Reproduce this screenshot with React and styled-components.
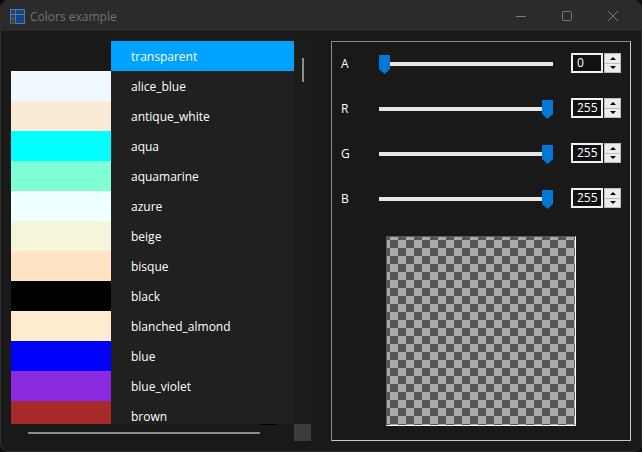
import React from "react";
import styled, { createGlobalStyle } from "styled-components";

const Global = createGlobalStyle`
  html, body { margin: 0; padding: 0; background: #0c0c0c; }
  #root { width: 642px; height: 452px; overflow: hidden; }
`;

const Window = styled.div`
  width: 642px; height: 452px; box-sizing: border-box;
  display: flex; flex-direction: column;
  background: #191919; border: 1px solid #2f2f2f; border-radius: 8px; overflow: hidden;
  font-family: "Open Sans", "Noto Sans", sans-serif; font-size: 12px; color: #fff;
`;
const TitleBar = styled.div`
  height: 30px; flex: none; display: flex; align-items: center;
  background: #2b2b2b; padding-left: 9px;
`;
const Title = styled.span`
  color: #737373; margin-left: 5px; font-size: 12px;
`;
const WindowButtons = styled.div`
  margin-left: auto; margin-right: 5px; display: flex; height: 100%;
`;
const WindowButton = styled.div`
  width: 46px; display: flex; align-items: center; justify-content: center;
`;
const Body = styled.div`
  flex: 1; display: flex; padding: 10px 11px 10px 10px; gap: 20px; min-height: 0;
`;
const ListColumn = styled.div`
  width: 300px; height: 400px; flex: none; display: grid;
  grid-template-columns: 283px 17px; grid-template-rows: 383px 17px;
`;
const List = styled.div`
  overflow: hidden; display: flex; flex-direction: column;
`;
const Row = styled.div`
  display: grid; grid-template-columns: 100px 183px; height: 30px; flex: none;
`;
const Swatch = styled.div`
  background: ${p => p.$c};
`;
const Name = styled.div`
  background: ${p => (p.$on ? "#00a2ff" : "#202020")};
  padding-left: 20px; line-height: 31px; color: #fff;
`;
const VScroll = styled.div`
  background: #1c1c1c; padding: 17px 0 0 8px;
`;
const VThumb = styled.div`
  width: 2px; height: 24px; background: #8c8c8c;
`;
const HScroll = styled.div`
  position: relative; background: #191919; padding: 8px 0 0 17px;
  &::after {
    content: ""; position: absolute; top: 0; left: 249px;
    width: 17px; height: 1px; background: #000;
  }
`;
const HThumb = styled.div`
  width: 232px; height: 2px; background: #8c8c8c;
`;
const Corner = styled.div`
  background: #3c3c3c;
`;
const Panel = styled.div`
  width: 300px; height: 400px; box-sizing: border-box; flex: none;
  border: 1px solid #c8c8c8; border-top-color: #8a8a8a; border-left-color: #8a8a8a;
  padding: 11px 9px 14px 9px; display: flex; flex-direction: column;
`;
const SliderRow = styled.div`
  display: flex; align-items: center; height: 20px; margin-bottom: 25px;
`;
const Label = styled.span`
  width: 38px; flex: none; font-size: 12px; line-height: 20px; margin-top: 2px;
`;
const Slider = styled.div`
  position: relative; width: 174px; height: 4px; flex: none;
  background: #e6e6e6; margin-top: 2px;
`;
const Thumb = styled.svg`
  position: absolute; top: -7px; left: ${p => p.$left}px; width: 11px; height: 19px; display: block;
`;
const Input = styled.div`
  margin-left: 18px; width: 33px; height: 20px; box-sizing: border-box;
  border: 2px solid #f2f2f2; background: #111; padding-left: 4px; line-height: 15px; font-size: 12px;
`;
const Spin = styled.div`
  margin-left: 1px; width: 17px; height: 20px; display: flex; flex-direction: column;
  border: 1px solid #bcbcbc; box-sizing: border-box; background: #bcbcbc; gap: 1px;
`;
const SpinButton = styled.div`
  flex: 1; background: #ececec; display: flex; align-items: center; justify-content: center;
`;
const Arrow = styled.div`
  width: 0; height: 0; border-left: 3.5px solid transparent; border-right: 3.5px solid transparent;
  ${p => (p.$up ? "border-bottom: 3px solid #000;" : "border-top: 3px solid #000;")}
`;
const Preview = styled.div`
  width: 190px; height: 190px; box-sizing: border-box; margin: auto 0 0 45px;
  border: 1px solid #fff; border-top-color: #5a5a5a; border-left-color: #5a5a5a;
  background-color: #555;
  background-image: conic-gradient(#aaa 25%, #555 0 50%, #aaa 0 75%, #555 0);
  background-size: 16px 16px; background-position: 3px 3px;
`;

const colors = [
  ["transparent", "transparent"], ["alice_blue", "#f0f8ff"], ["antique_white", "#faebd7"],
  ["aqua", "#00ffff"], ["aquamarine", "#7fffd4"], ["azure", "#f0ffff"], ["beige", "#f5f5dc"],
  ["bisque", "#ffe4c4"], ["black", "#000000"], ["blanched_almond", "#ffebcd"], ["blue", "#0000ff"],
  ["blue_violet", "#8a2be2"], ["brown", "#a52a2a"],
];
const channels = [["A", 0, 0], ["R", 255, 163], ["G", 255, 163], ["B", 255, 163]];

export default function App() {
  return (
    <Window>
      <Global />
      <TitleBar>
        <svg width="15" height="15" viewBox="0 0 15 15">
          <rect x="0.5" y="0.5" width="14" height="14" fill="#0b468f" stroke="#6b7580" />
          <path d="M5.5 0.5V14.5M0.5 5.5H14.5M0.5 10H5.5" stroke="#6b7580" fill="none" />
          <rect x="1" y="10.5" width="4" height="4" fill="#2b2b2b" />
          <path d="M3 10V14.5" stroke="#6b7580" />
        </svg>
        <Title>Colors example</Title>
        <WindowButtons>
          <WindowButton>
            <svg width="12" height="12" viewBox="0 0 12 12"><path d="M1 6.5H11" stroke="#7a7a7a" /></svg>
          </WindowButton>
          <WindowButton>
            <svg width="12" height="12" viewBox="0 0 12 12"><rect x="1.5" y="1.5" width="9" height="9" rx="1" fill="none" stroke="#7a7a7a" /></svg>
          </WindowButton>
          <WindowButton>
            <svg width="12" height="12" viewBox="0 0 12 12"><path d="M1 1L11 11M11 1L1 11" stroke="#7a7a7a" /></svg>
          </WindowButton>
        </WindowButtons>
      </TitleBar>
      <Body>
        <ListColumn>
          <List>
            {colors.map(([n, c], i) => (
              <Row key={n}>
                <Swatch $c={c} />
                <Name $on={i === 0}>{n}</Name>
              </Row>
            ))}
          </List>
          <VScroll><VThumb /></VScroll>
          <HScroll><HThumb /></HScroll>
          <Corner />
        </ListColumn>
        <Panel>
          {channels.map(([l, v, left]) => (
            <SliderRow key={l}>
              <Label>{l}</Label>
              <Slider>
                <Thumb $left={left} viewBox="0 0 11 19">
                  <path d="M0 0H11V14L5.5 19L0 14Z" fill="#0078d7" />
                </Thumb>
              </Slider>
              <Input>{v}</Input>
              <Spin>
                <SpinButton><Arrow $up /></SpinButton>
                <SpinButton><Arrow /></SpinButton>
              </Spin>
            </SliderRow>
          ))}
          <Preview />
        </Panel>
      </Body>
    </Window>
  );
}
